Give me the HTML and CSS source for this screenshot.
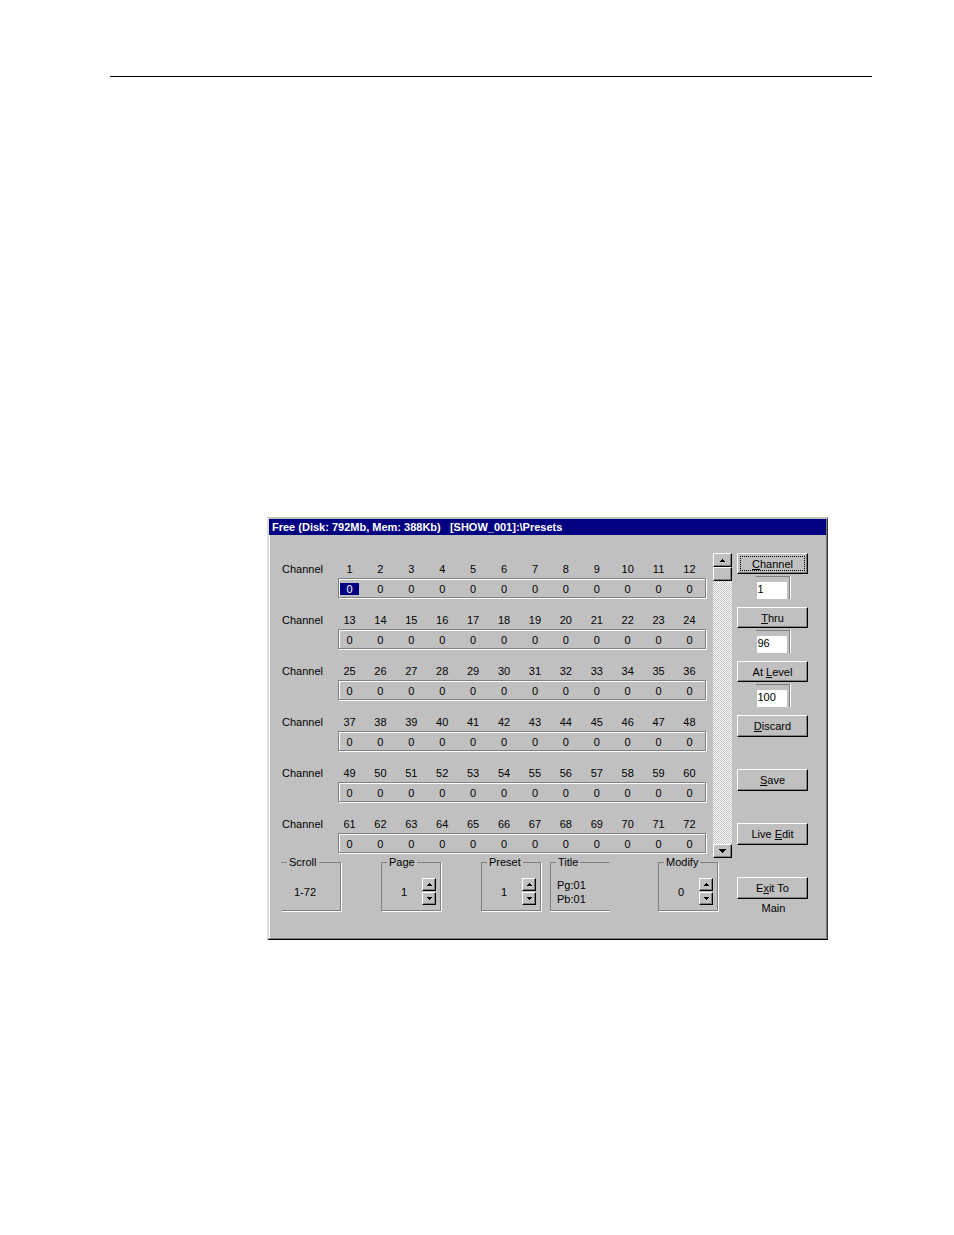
FILE: index.html
```html
<!DOCTYPE html>
<html lang="en">
<head>
<meta charset="utf-8">
<title>Presets</title>
<link rel="stylesheet" href="styles.css">
</head>
<body>
<main class="page">
  <hr class="rule">
  <section class="window">
    <h1 class="titlebar">Free (Disk: 792Mb, Mem: 388Kb)   [SHOW_001]:\Presets</h1>
    <div class="content">
      <div class="left">
        <div class="editor">
          <div class="banks" id="banks"></div>
          <div class="scrollbar">
            <button class="btn scroll-btn" type="button" aria-label="Scroll up"><svg width="5" height="3" viewBox="0 0 5 3"><path d="M2 0h1v1h1v1h1v1H0V2h1V1h1z"/></svg></button>
            <button class="btn scroll-btn" type="button" aria-label="Scroll position"></button>
            <div class="track"></div>
            <button class="btn scroll-btn" type="button" aria-label="Scroll down"><svg width="7" height="4" viewBox="0 0 7 4"><path d="M0 0h7v1H6v1H5v1H4v1H3V3H2V2H1V1H0z"/></svg></button>
          </div>
        </div>
        <div class="groups">
          <fieldset class="group group-open-left"><legend>Scroll</legend><span class="range">1-72</span></fieldset>
          <fieldset class="group"><legend>Page</legend><output class="value">1</output>
            <span class="spinner">
              <button class="btn spin" type="button" aria-label="Page up"><svg width="5" height="3" viewBox="0 0 5 3"><path d="M2 0h1v1h1v1h1v1H0V2h1V1h1z"/></svg></button>
              <button class="btn spin" type="button" aria-label="Page down"><svg width="5" height="3" viewBox="0 0 5 3"><path d="M0 0h5v1H4v1H3v1H2V2H1V1H0z"/></svg></button>
            </span>
          </fieldset>
          <fieldset class="group"><legend>Preset</legend><output class="value">1</output>
            <span class="spinner">
              <button class="btn spin" type="button" aria-label="Preset up"><svg width="5" height="3" viewBox="0 0 5 3"><path d="M2 0h1v1h1v1h1v1H0V2h1V1h1z"/></svg></button>
              <button class="btn spin" type="button" aria-label="Preset down"><svg width="5" height="3" viewBox="0 0 5 3"><path d="M0 0h5v1H4v1H3v1H2V2H1V1H0z"/></svg></button>
            </span>
          </fieldset>
          <fieldset class="group group-open-right"><legend>Title</legend><span class="names">Pg:01<br>Pb:01</span></fieldset>
          <fieldset class="group"><legend>Modify</legend><output class="value">0</output>
            <span class="spinner">
              <button class="btn spin" type="button" aria-label="Level up"><svg width="5" height="3" viewBox="0 0 5 3"><path d="M2 0h1v1h1v1h1v1H0V2h1V1h1z"/></svg></button>
              <button class="btn spin" type="button" aria-label="Level down"><svg width="5" height="3" viewBox="0 0 5 3"><path d="M0 0h5v1H4v1H3v1H2V2H1V1H0z"/></svg></button>
            </span>
          </fieldset>
        </div>
      </div>
      <div class="actions">
        <div class="slot">
          <button class="btn action action-default" type="button" id="b-channel"><u>C</u>hannel</button>
          <div class="entry"><input type="text" value="1" aria-labelledby="b-channel"></div>
        </div>
        <div class="slot">
          <button class="btn action" type="button" id="b-thru"><u>T</u>hru</button>
          <div class="entry"><input type="text" value="96" aria-labelledby="b-thru"></div>
        </div>
        <div class="slot">
          <button class="btn action" type="button" id="b-level">At <u>L</u>evel</button>
          <div class="entry"><input type="text" value="100" aria-labelledby="b-level"></div>
        </div>
        <div class="slot"><button class="btn action" type="button"><u>D</u>iscard</button></div>
        <div class="slot"><button class="btn action" type="button"><u>S</u>ave</button></div>
        <div class="slot"><button class="btn action" type="button">Live <u>E</u>dit</button></div>
        <div class="slot slot-last"><button class="btn action" type="button" aria-describedby="exit-target">E<u>x</u>it To</button><span class="caption" id="exit-target">Main</span></div>
      </div>
    </div>
  </section>
</main>
<script src="banks.js"></script>
</body>
</html>
```

FILE: styles.css
```css
* { box-sizing: border-box; }

body {
  margin: 0;
  background: #fff;
  color: #000;
  font: 11px/14px "Liberation Sans", Arial, sans-serif;
}

button, input {
  margin: 0;
  padding: 0;
  border: 0;
  border-radius: 0;
  color: inherit;
  font: inherit;
}

.page { padding: 76px 82px 0 110px; }

.rule {
  margin: 0 0 440px;
  border: 0;
  border-top: 1px solid #000;
}

.window {
  margin: 0 44px 0 157px;
  background: #c0c0c0;
  border: 2px solid #c0c0c0;
  border-left-color: #dfdfdf;
  border-right: 1px solid #303030;
  border-bottom: 1px solid #000;
  box-shadow: inset -1px -1px #808080, inset 1px 0 #fff;
}

.titlebar {
  margin: 0 1px 0 0;
  padding: 0 3px;
  background: #000080;
  color: #fff;
  font-size: 11px;
  line-height: 16px;
  font-weight: bold;
  white-space: pre;
}

.content {
  display: flex;
  gap: 5px;
  padding: 18px 19px 24px 12px;
}

.left { flex: 1; }

.editor {
  display: flex;
  gap: 7px;
}

.banks {
  flex: 1;
  display: flex;
  flex-direction: column;
  gap: 15px;
  padding-top: 9px;
}

.bank {
  display: grid;
  grid-template-columns: 57px 1fr;
  row-gap: 2px;
}

.bank-name { padding-left: 1px; }

.numbers {
  display: flex;
  justify-content: space-between;
  padding: 0 7px 0 2px;
}

.numbers label {
  width: 19px;
  text-align: center;
}

.levels {
  grid-column: 2;
  display: flex;
  justify-content: space-between;
  align-items: center;
  height: 20px;
  padding: 2px 6px 0 1px;
  border: 1px solid #808080;
  box-shadow: inset 1px 1px #fff, 1px 1px #fff;
}

.levels input {
  width: 19px;
  height: 12px;
  line-height: 12px;
  background: transparent;
  text-align: center;
}

.levels .selected {
  background: #000080;
  color: #fff;
}

.btn {
  background: #c0c0c0;
  border: 1px solid;
  border-color: #fff #000 #000 #fff;
  box-shadow: inset -1px -1px #808080;
}

.btn svg {
  display: block;
  margin: 0 auto;
  shape-rendering: crispEdges;
}

.scrollbar {
  display: flex;
  flex-direction: column;
  width: 19px;
  height: 305px;
}

.scroll-btn { height: 14px; }

.track {
  flex: 1;
  background: conic-gradient(#fff 25%, #c0c0c0 0 50%, #fff 0 75%, #c0c0c0 0) 0 0 / 2px 2px;
}

.groups {
  display: grid;
  grid-template-columns: 100fr 100fr 69fr 108fr 74fr;
}

.group {
  display: flex;
  align-items: center;
  width: 60px;
  height: 56px;
  min-width: 0;
  margin: -3px 0 0;
  padding: 4px 0 0;
  border: 1px solid #808080;
  box-shadow: 1px 1px #fff;
}

.group legend {
  margin-left: 5px;
  padding: 0 2px;
}

.group-open-left { border-left-color: transparent; }

.group-open-right {
  border-right-color: transparent;
  box-shadow: 0 1px #fff;
}

.range { padding-left: 12px; }

.names { padding-left: 6px; }

.value {
  flex: 1;
  padding-left: 19px;
}

.spinner {
  display: flex;
  flex-direction: column;
  gap: 1px;
  padding-right: 4px;
}

.spin {
  width: 14px;
  height: 13px;
}

.actions {
  display: flex;
  flex-direction: column;
  gap: 8px;
  width: 71px;
}

.slot {
  display: flex;
  flex-direction: column;
  align-items: center;
  gap: 2px;
  height: 46px;
}

.slot-last { height: auto; }

.action {
  width: 100%;
  height: 22px;
  line-height: 18px;
}

.action-default {
  outline: 1px dotted #000;
  outline-offset: -4px;
}

.caption { padding-left: 2px; }

.entry {
  width: 34px;
  height: 23px;
  padding: 5px 1px 0;
  border: 1px solid #808080;
  border-width: 1px 1px 0 0;
  box-shadow: 1px 0 #fff;
}

.entry input {
  display: block;
  width: 30px;
  height: 17px;
  padding: 0 0 4px 1px;
  background: #fff;
}
```

FILE: banks.js
```js
const BANKS = 6;
const PER_BANK = 12;
const root = document.getElementById("banks");

for (let b = 0; b < BANKS; b++) {
  let labels = "";
  let inputs = "";
  for (let i = 1; i <= PER_BANK; i++) {
    const n = b * PER_BANK + i;
    labels += `<label for="ch${n}">${n}</label>`;
    inputs += `<input type="text" id="ch${n}" value="0"${n === 1 ? ' class="selected"' : ""}>`;
  }
  root.insertAdjacentHTML("beforeend",
    `<div class="bank"><span class="bank-name">Channel</span><div class="numbers">${labels}</div><div class="levels">${inputs}</div></div>`);
}
```
